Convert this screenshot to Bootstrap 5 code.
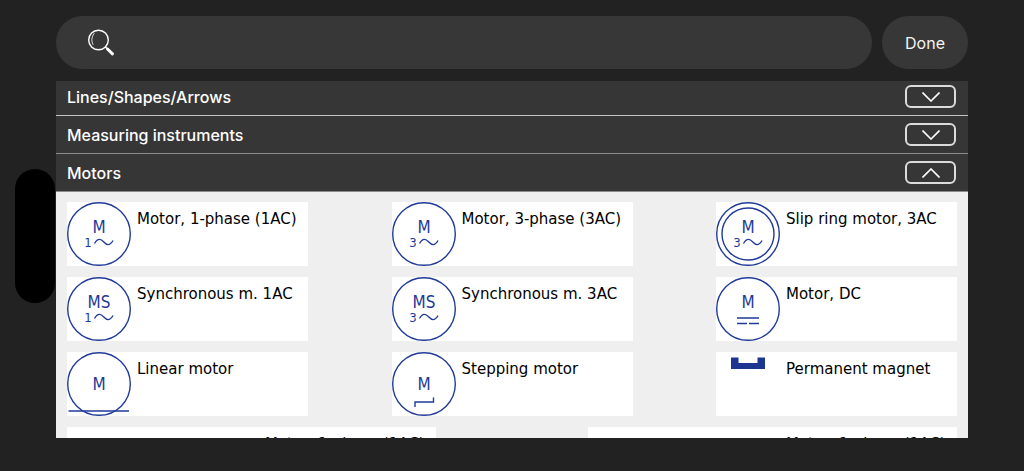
<!DOCTYPE html>
<html lang="en">
<head>
<meta charset="utf-8">
<meta name="viewport" content="width=device-width, initial-scale=1">
<title>Symbol library</title>
<link rel="stylesheet" href="https://cdn.jsdelivr.net/npm/bootstrap@5.3.0/dist/css/bootstrap.min.css">
<style>
  body { background: #222; font-family: Inter, "Liberation Sans", sans-serif; }
  .picker { padding: 16px 56px 33px; }
  .search-pill, .done-pill { background: #373737; height: 53px; color: #fff; }
  .search-pill { padding: 0 32px; }
  .search-pill input, .search-pill input:focus { background: transparent; border: 0; box-shadow: none; color: #fff; }
  .done-pill, .done-pill:hover { width: 86px; font-size: 16px; background: #373737; color: #f4f4f4; }
  .bar-gap { gap: 10px; margin-bottom: 12px; }
  .panel { background: #efefef; min-height: 0; }
  .group-head { background: #363636; color: #fff; height: 38px; padding: 0 12px 7px 11px; border-bottom: 1px solid #8c8c8c; }
  .group-head:first-child { height: 35px; border-color: #c4c4c4; }
  .group-head h2 { font-size: 16px; line-height: 22px; font-weight: 500; }
  .toggle { width: 51px; height: 23px; border: 2px solid #dcdcdc; border-radius: 6px; background: transparent; }
  .symbols { padding: 10px 11px; gap: 11px; }
  .symbol { width: 241px; height: 64px; background: #fff; border: 0; color: #000; font: 15px/20px Verdana, "DejaVu Sans", sans-serif; gap: 6px; }
  .symbol-wide { width: 369px; gap: 134px; }
  .symbol span { padding-top: 7px; }
  .symbol svg { fill: none; stroke: #1f3a98; }
  .symbol text { fill: #1f3a98; stroke: none; font: 17px "DejaVu Sans Condensed", "DejaVu Sans", sans-serif; text-anchor: middle; }
  .symbol .phase { font-size: 13px; }
  .symbol .solid { fill: #1c3590; stroke: none; }
  .island { left: 15px; top: 50%; width: 40px; height: 134px; transform: translateY(-50%); background: #000; }
</style>
</head>
<body>
<div class="island position-absolute rounded-pill"></div>
<main class="picker vh-100 d-flex flex-column">
  <form class="bar-gap d-flex">
    <div class="search-pill rounded-pill flex-grow-1 d-flex align-items-center">
      <label for="q" class="d-flex" aria-label="Search"><svg width="28" height="28" viewBox="0 0 28 28" fill="none" stroke="#fff" stroke-linecap="round"><circle cx="10.500" cy="11" r="9.800" stroke-width="1.400"/><path d="M6 4.500Q2 10 5 15.500" stroke-width="0.800"/><path d="M17.500 18l2 2" stroke-width="1.500"/><path d="M19.500 20l5 4.800" stroke-width="3"/></svg></label>
      <input id="q" type="text" class="form-control" aria-label="Search">
    </div>
    <button type="button" class="done-pill btn rounded-pill p-0">Done</button>
  </form>

  <section class="panel flex-grow-1 overflow-hidden">
    <div class="group-head d-flex align-items-end justify-content-between">
      <h2 class="m-0">Lines/Shapes/Arrows</h2>
      <button class="toggle d-flex align-items-center justify-content-center p-0" aria-label="Expand"><svg width="18" height="10" viewBox="0 0 18 10" fill="none" stroke="#fff" stroke-width="1.600"><path d="M0.500 0.500L9 9l8.500-8.500"/></svg></button>
    </div>
    <div class="group-head d-flex align-items-end justify-content-between">
      <h2 class="m-0">Measuring instruments</h2>
      <button class="toggle d-flex align-items-center justify-content-center p-0" aria-label="Expand"><svg width="18" height="10" viewBox="0 0 18 10" fill="none" stroke="#fff" stroke-width="1.600"><path d="M0.500 0.500L9 9l8.500-8.500"/></svg></button>
    </div>
    <div class="group-head d-flex align-items-end justify-content-between">
      <h2 class="m-0">Motors</h2>
      <button class="toggle d-flex align-items-center justify-content-center p-0" aria-label="Collapse"><svg width="18" height="10" viewBox="0 0 18 10" fill="none" stroke="#fff" stroke-width="1.600"><path d="M0.500 9.500L9 1l8.500 8.500"/></svg></button>
    </div>

    <div class="symbols d-flex flex-wrap justify-content-between">
      <button class="symbol d-flex align-items-start p-0"><svg width="64" height="64" stroke-width="1.400"><circle cx="32" cy="32" r="31.300"/><text x="32" y="31">M</text><text class="phase" x="21" y="45">1</text><path d="M27.500 41.500C31 35.500 34 37 36.800 40S42.500 44.500 46 38.500"/></svg><span>Motor, 1-phase (1AC)</span></button>
      <button class="symbol d-flex align-items-start p-0"><svg width="64" height="64" stroke-width="1.400"><circle cx="32" cy="32" r="31.300"/><text x="32" y="31">M</text><text class="phase" x="21" y="45">3</text><path d="M27.500 41.500C31 35.500 34 37 36.800 40S42.500 44.500 46 38.500"/></svg><span>Motor, 3-phase (3AC)</span></button>
      <button class="symbol d-flex align-items-start p-0"><svg width="64" height="64" stroke-width="1.400"><circle cx="32" cy="32" r="31.300"/><circle cx="32" cy="32" r="26"/><text x="32" y="31">M</text><text class="phase" x="21" y="45">3</text><path d="M27.500 41.500C31 35.500 34 37 36.800 40S42.500 44.500 46 38.500"/></svg><span>Slip ring motor, 3AC</span></button>

      <button class="symbol d-flex align-items-start p-0"><svg width="64" height="64" stroke-width="1.400"><circle cx="32" cy="32" r="31.300"/><text x="32" y="31">MS</text><text class="phase" x="21" y="45">1</text><path d="M27.500 41.500C31 35.500 34 37 36.800 40S42.500 44.500 46 38.500"/></svg><span>Synchronous m. 1AC</span></button>
      <button class="symbol d-flex align-items-start p-0"><svg width="64" height="64" stroke-width="1.400"><circle cx="32" cy="32" r="31.300"/><text x="32" y="31">MS</text><text class="phase" x="21" y="45">3</text><path d="M27.500 41.500C31 35.500 34 37 36.800 40S42.500 44.500 46 38.500"/></svg><span>Synchronous m. 3AC</span></button>
      <button class="symbol d-flex align-items-start p-0"><svg width="64" height="64" stroke-width="1.400"><circle cx="32" cy="32" r="31.300"/><text x="32" y="31">M</text><path d="M21 41h22M21 46.500h10M33 46.500h10"/></svg><span>Motor, DC</span></button>

      <button class="symbol d-flex align-items-start p-0"><svg width="64" height="64" stroke-width="1.400"><circle cx="32" cy="32" r="31.300"/><text x="32" y="38">M</text><path d="M1.500 59h60.500"/></svg><span>Linear motor</span></button>
      <button class="symbol d-flex align-items-start p-0"><svg width="64" height="64" stroke-width="1.400"><circle cx="32" cy="32" r="31.300"/><text x="32" y="38">M</text><path d="M23 55v-5h18.500v-4.500"/></svg><span>Stepping motor</span></button>
      <button class="symbol d-flex align-items-start p-0"><svg width="64" height="64"><path class="solid" d="M15 5.500h7.500v5.500h19v-5.500h7.500v11.500h-34z"/></svg><span>Permanent magnet</span></button>

      <button class="symbol symbol-wide d-flex align-items-start p-0"><svg width="64" height="64"></svg><span>Motor, 1-phase (1AC)</span></button>
      <button class="symbol symbol-wide d-flex align-items-start p-0"><svg width="64" height="64"></svg><span>Motor, 1-phase (1AC)</span></button>
    </div>
  </section>
</main>
<script src="https://cdn.jsdelivr.net/npm/bootstrap@5.3.0/dist/js/bootstrap.bundle.min.js"></script>
</body>
</html>
